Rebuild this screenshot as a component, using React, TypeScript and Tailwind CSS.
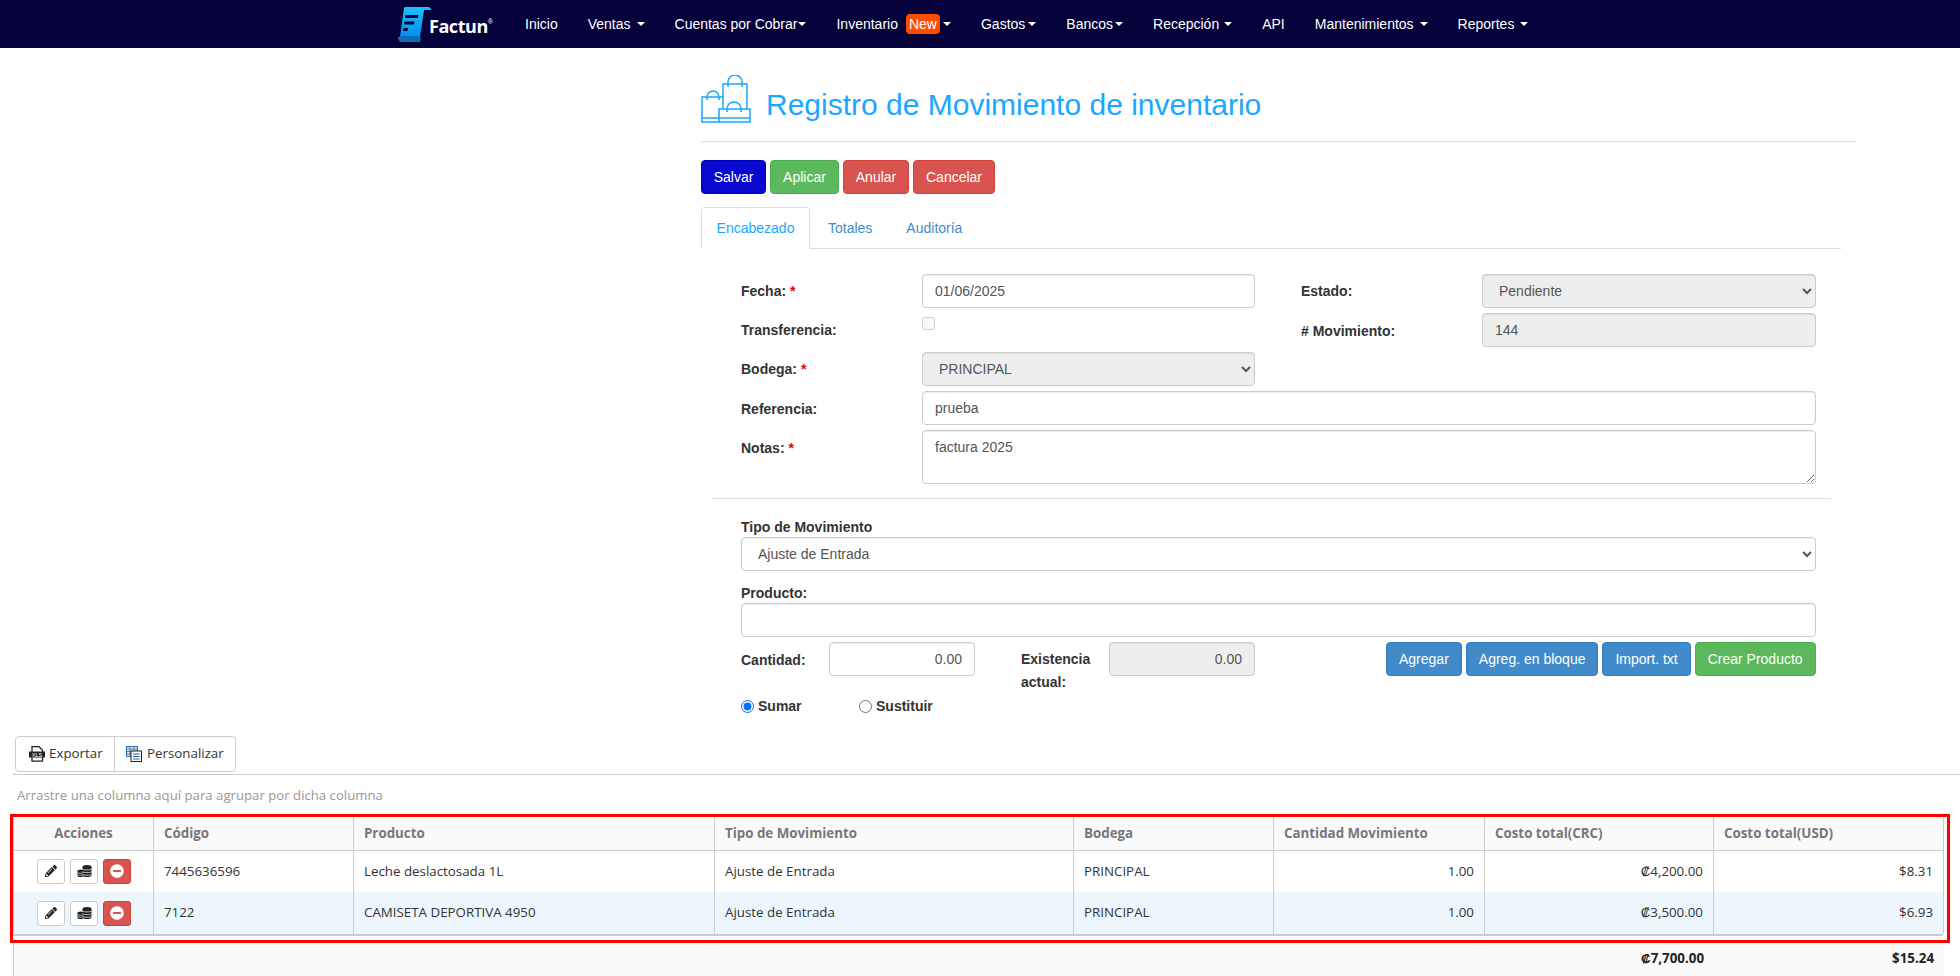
import { FaMinusCircle, FaPencilAlt } from "react-icons/fa";

const navItems = [
  { label: "Inicio" },
  { label: "Ventas", caret: "ml-[6px] flex" },
  { label: "Cuentas por Cobrar", caret: "ml-[1px] flex" },
  { label: "Inventario", caret: "ml-[3px] flex", badge: "New" },
  { label: "Gastos", caret: "ml-[3px] flex" },
  { label: "Bancos", caret: "ml-[2px] flex" },
  { label: "Recepción", caret: "ml-[5px] flex" },
  { label: "API" },
  { label: "Mantenimientos", caret: "ml-[6px] flex" },
  { label: "Reportes", caret: "ml-[6px] flex" },
];

const rows = [
  { code: "7445636596", product: "Leche deslactosada 1L", qty: "1.00", crc: "₡4,200.00", usd: "$8.31", alt: false },
  { code: "7122", product: "CAMISETA DEPORTIVA 4950", qty: "1.00", crc: "₡3,500.00", usd: "$6.93", alt: true },
];

const headers = ["Código", "Producto", "Tipo de Movimiento", "Bodega", "Cantidad Movimiento", "Costo total(CRC)", "Costo total(USD)"];

const inputClass = "h-[34px] rounded border border-[#ccc] bg-white px-3 text-sm text-[#555] shadow-[inset_0_1px_1px_rgba(0,0,0,0.075)] outline-none";
const disabledClass = "h-[34px] rounded border border-[#ccc] bg-[#eee] px-3 text-sm text-[#555] shadow-[inset_0_1px_1px_rgba(0,0,0,0.075)] outline-none";
const labelClass = "text-sm font-bold text-[#333]";

function Caret() {
  return <span className="inline-block h-0 w-0 border-x-4 border-t-4 border-x-transparent border-t-white" />;
}

function Logo() {
  return (
    <div className="flex items-center">
      <svg width="34" height="36" viewBox="0 0 34 36">
        <defs>
          <linearGradient id="logoBlue" x1="0" y1="0" x2="0" y2="1">
            <stop offset="0" stopColor="#17c4ff" />
            <stop offset="1" stopColor="#0a8df0" />
          </linearGradient>
        </defs>
        <path d="M6 2C6 1 7 1 8 1h22c2 0 3 1 3 3h-7l-4 27H2z" fill="url(#logoBlue)" />
        <path d="M0 33c0-2 1-3 3-3h18l2 3-1 3H2z" fill="#0a6fb8" />
        <path d="M7.500 9h13l-.5 3H7zM6.500 15.500h10l-.5 3H6zM5.500 22h4.500l-.5 3H5z" fill="#05013a" />
      </svg>
      <span className="ml-[-3px] mt-[4px] font-['Open_Sans',sans-serif] text-[18px] font-bold leading-none tracking-tight text-white">Factun</span>
      <span className="mb-[6px] text-[7px] leading-none text-white">®</span>
    </div>
  );
}

function BagsIcon() {
  return (
    <svg width="50" height="50" viewBox="0 0 50 50" fill="none" stroke="#1aa7ff" strokeWidth="1.5">
      <path d="M22 22V9h24v25" />
      <path d="M27 12V7a7 7 0 0 1 14 0v5" />
      <path d="M18 47H1V22h21v12" />
      <path d="M6 25v-3a6 6 0 0 1 12 0v3" />
      <path d="M18 34h31v13H18z" />
      <path d="M26 37v-3a7 7 0 0 1 14 0v3" />
      <path d="M1 43h17M18 43h31" />
    </svg>
  );
}

function XlsIcon() {
  return (
    <svg width="16" height="16" viewBox="0 0 16 16">
      <path d="M3 .700h7l3.500 3.500v11h-10.500z" fill="none" stroke="#222" strokeWidth="1.300" />
      <rect x="0" y="5.500" width="16" height="6" fill="#222" />
      <text x="8" y="10.600" textAnchor="middle" fontSize="5.500" fontFamily="Liberation Sans" fill="#fff">XLS</text>
    </svg>
  );
}

function ColumnsIcon() {
  return (
    <svg width="16" height="16" viewBox="0 0 16 16" fill="none">
      <rect x="0.5" y="0.5" width="11" height="10" fill="#dbe6f5" stroke="#3b6aa8" />
      <path d="M0.500 3h11M0.500 5.500h11M0.500 8h11M4 1v9M8 1v9" stroke="#3b6aa8" strokeWidth="0.800" />
      <rect x="5" y="5" width="10.500" height="10.500" fill="#fff" stroke="#222" />
      <path d="M7 8h6.500M7 10.500h6.500M7 13h6.500" stroke="#2a5ea8" />
    </svg>
  );
}

function CoinsIcon() {
  return (
    <svg width="15" height="12" viewBox="0 0 15 12" fill="#222">
      <ellipse cx="10" cy="2" rx="4.500" ry="2" />
      <rect x="5.500" y="2" width="9" height="8" />
      <ellipse cx="10" cy="10" rx="4.500" ry="2" />
      <ellipse cx="3.500" cy="6" rx="3" ry="1.500" />
      <rect x="0.500" y="6" width="6" height="4.500" />
      <ellipse cx="3.500" cy="10.500" rx="3" ry="1.500" />
      <path d="M5.500 4c1 1.200 8 1.200 9 0M5.500 6.700c1 1.200 8 1.200 9 0M5.500 9.400c1 1.200 8 1.200 9 0" stroke="#fff" strokeWidth="0.700" fill="none" />
      <path d="M0.500 7.500c.8 1 5.200 1 6 0M0.500 9.500c.8 1 5.200 1 6 0" stroke="#fff" strokeWidth="0.600" fill="none" />
    </svg>
  );
}

function ActionButtons() {
  return (
    <div className="flex justify-center gap-[5px] pl-[1px]">
      <button className="flex h-[25px] w-[28px] items-center justify-center rounded-[3px] border border-[#ccc] bg-white text-[12px] text-[#222]">
        <FaPencilAlt />
      </button>
      <button className="flex h-[25px] w-[28px] items-center justify-center rounded-[3px] border border-[#ccc] bg-white">
        <CoinsIcon />
      </button>
      <button className="flex h-[25px] w-[28px] items-center justify-center rounded-[3px] border border-[#d43f3a] bg-[#d9534f] text-[14px] text-white">
        <FaMinusCircle />
      </button>
    </div>
  );
}

export default function App() {
  return (
    <div className="h-[976px] overflow-hidden bg-white font-['Liberation_Sans',sans-serif] text-sm text-[#333]">
      <nav className="flex h-[48px] items-center bg-[#05013a] pl-[398px] text-white">
        <div className="w-[112px]">
          <Logo />
        </div>
        {navItems.map((item) => (
          <a key={item.label} className="flex items-center px-[15px] text-sm">
            {item.label}
            {item.badge && <span className="ml-2 rounded-[4px] bg-[#ff4d00] px-[3px] leading-[20px]">{item.badge}</span>}
            {item.caret && (
              <span className={item.caret}>
                <Caret />
              </span>
            )}
          </a>
        ))}
      </nav>

      <main className="ml-[701px] w-[1155px]">
        <div className="flex items-center gap-[15px] border-b border-[#ddd] pb-[16px] pt-[27px]">
          <BagsIcon />
          <h1 className="pt-[8px] text-[30px] font-normal leading-[33px] text-[#1aa7ff]">Registro de Movimiento de inventario</h1>
        </div>

        <div className="mt-[18px] flex gap-[4px]">
          <button className="h-[34px] w-[65px] rounded border border-[#0000b8] bg-[#0808d0] text-white">Salvar</button>
          <button className="h-[34px] w-[69px] rounded border border-[#4cae4c] bg-[#5cb85c] text-white">Aplicar</button>
          <button className="h-[34px] w-[66px] rounded border border-[#d43f3a] bg-[#d9534f] text-white">Anular</button>
          <button className="h-[34px] w-[82px] rounded border border-[#d43f3a] bg-[#d9534f] text-white">Cancelar</button>
        </div>

        <div className="mt-[13px] flex h-[42px] w-[1140px] border-b border-[#ddd]">
          <div className="h-[42px] w-[109px] rounded-t border border-b-white border-[#ddd] bg-white text-center leading-[40px] text-[#1aa7ff]">Encabezado</div>
          <div className="ml-[2px] px-[16px] leading-[42px] text-[#428bca]">Totales</div>
          <div className="ml-[2px] px-[16px] leading-[42px] text-[#428bca]">Auditoría</div>
        </div>

        <section className="w-[1115px] pl-[40px]">
          <div className="mt-[25px] flex">
            <label className={`${labelClass} w-[181px] pt-[7px]`}>Fecha: <span className="text-red-600">*</span></label>
            <input className={`${inputClass} w-[333px]`} defaultValue="01/06/2025" />
            <label className={`${labelClass} ml-[46px] w-[181px] pt-[7px]`}>Estado:</label>
            <select disabled className={`${disabledClass} w-[334px]`} defaultValue="Pendiente">
              <option>Pendiente</option>
            </select>
          </div>

          <div className="mt-[5px] flex">
            <label className={`${labelClass} w-[181px] pt-[7px]`}>Transferencia:</label>
            <div className="w-[333px] pt-[4px]">
              <input type="checkbox" disabled className="block h-[13px] w-[13px]" />
            </div>
            <label className={`${labelClass} ml-[46px] w-[181px] pt-[8px]`}># Movimiento:</label>
            <input disabled className={`${disabledClass} w-[334px]`} defaultValue="144" />
          </div>

          <div className="mt-[5px] flex">
            <label className={`${labelClass} w-[181px] pt-[7px]`}>Bodega: <span className="text-red-600">*</span></label>
            <select disabled className={`${disabledClass} w-[333px]`} defaultValue="PRINCIPAL">
              <option>PRINCIPAL</option>
            </select>
          </div>

          <div className="mt-[5px] flex">
            <label className={`${labelClass} w-[181px] pt-[8px]`}>Referencia:</label>
            <input className={`${inputClass} w-[894px]`} defaultValue="prueba" />
          </div>

          <div className="mt-[5px] flex">
            <label className={`${labelClass} w-[181px] pt-[8px]`}>Notas: <span className="text-red-600">*</span></label>
            <textarea className="h-[54px] w-[894px] rounded border border-[#ccc] bg-white px-3 py-[6px] text-sm text-[#555] shadow-[inset_0_1px_1px_rgba(0,0,0,0.075)] outline-none" defaultValue="factura 2025" />
          </div>
        </section>

        <div className="ml-[10px] mt-[14px] w-[1120px] border-t border-[#ddd]" />

        <section className="w-[1115px] pl-[40px]">
          <label className={`${labelClass} mt-[18px] block leading-[20px]`}>Tipo de Movimiento</label>
          <select className={`${inputClass} block w-[1075px]`} defaultValue="Ajuste de Entrada">
            <option>Ajuste de Entrada</option>
          </select>
          <label className={`${labelClass} mt-[12px] block leading-[20px]`}>Producto:</label>
          <input className={`${inputClass} block w-[1075px]`} />

          <div className="mt-[5px] flex">
            <label className={`${labelClass} w-[88px] pt-[8px]`}>Cantidad:</label>
            <input className={`${inputClass} w-[146px] text-right`} defaultValue="0.00" />
            <label className={`${labelClass} ml-[46px] w-[88px] pt-[6px] leading-[23px]`}>Existencia actual:</label>
            <input disabled className={`${disabledClass} w-[146px] text-right`} defaultValue="0.00" />
            <div className="ml-[131px] flex gap-[4px]">
              <button className="h-[34px] rounded border border-[#357ebd] bg-[#428bca] px-3 text-white">Agregar</button>
              <button className="h-[34px] rounded border border-[#357ebd] bg-[#428bca] px-3 text-white">Agreg. en bloque</button>
              <button className="h-[34px] rounded border border-[#357ebd] bg-[#428bca] px-3 text-white">Import. txt</button>
              <button className="h-[34px] rounded border border-[#4cae4c] bg-[#5cb85c] px-3 text-white">Crear Producto</button>
            </div>
          </div>

          <div className="mt-[2px] flex items-center">
            <input type="radio" name="modo" defaultChecked className="h-[13px] w-[13px]" />
            <label className={`${labelClass} ml-[4px] w-[101px]`}>Sumar</label>
            <input type="radio" name="modo" className="h-[13px] w-[13px]" />
            <label className={`${labelClass} ml-[4px]`}>Sustituir</label>
          </div>
        </section>
      </main>

      <div className="mt-[20px] font-['Open_Sans',sans-serif] text-[13.33px]">
        <div className="ml-[13px] border-b border-[#ccc] pb-[2px]">
          <div className="ml-[2px] flex h-[36px] w-[221px] rounded border border-[#ccc] text-[#333]">
            <div className="flex w-[99px] items-center gap-[4px] border-r border-[#ccc] pl-[13px]">
              <XlsIcon />
              Exportar
            </div>
            <div className="flex items-center gap-[5px] pl-[11px]">
              <ColumnsIcon />
              Personalizar
            </div>
          </div>
        </div>
        <p className="ml-[17px] mt-[10px] text-[13.2px] leading-[20px] text-[#999]">Arrastre una columna aquí para agrupar por dicha columna</p>

        <div className="ml-[10px] mt-[9px] w-[1940px] border-[3px] border-[#f00] pb-[4px] pr-[4px]">
          <table className="w-[1930px] table-fixed border-collapse">
            <colgroup>
              <col className="w-[140px]" />
              <col className="w-[200px]" />
              <col className="w-[361px]" />
              <col className="w-[359px]" />
              <col className="w-[200px]" />
              <col className="w-[211px]" />
              <col className="w-[229px]" />
              <col className="w-[230px]" />
            </colgroup>
            <thead>
              <tr className="h-[33px] border-b border-[#ccc] bg-[#fafafa] font-bold text-[#777]">
                <th className="border-x border-[#ccc] text-center">Acciones</th>
                {headers.map((header) => (
                  <th key={header} className="border-x border-[#ccc] px-[10px] text-left">{header}</th>
                ))}
              </tr>
            </thead>
            <tbody>
              {rows.map((row) => (
                <tr key={row.code} className={`h-[42px] text-[#333] ${row.alt ? "bg-[#edf6fd]" : "bg-white"}`}>
                  <td className="border-x border-[#ccc]"><ActionButtons /></td>
                  <td className="border-x border-[#ccc] px-[10px]">{row.code}</td>
                  <td className="border-x border-[#ccc] px-[10px]">{row.product}</td>
                  <td className="border-x border-[#ccc] px-[10px]">Ajuste de Entrada</td>
                  <td className="border-x border-[#ccc] px-[10px]">PRINCIPAL</td>
                  <td className="border-x border-[#ccc] px-[10px] text-right">{row.qty}</td>
                  <td className="border-x border-[#ccc] px-[10px] text-right">{row.crc}</td>
                  <td className="border-x border-[#ccc] px-[10px] text-right">{row.usd}</td>
                </tr>
              ))}
            </tbody>
          </table>
          <div className="h-[2px] w-[1930px] bg-[#ccc]" />
        </div>

        <div className="ml-[13px] flex h-[40px] w-[1931px] items-start justify-end border-l border-[#ccc] bg-[#fafafa] pt-[6px] font-bold text-[#222]">
          <span className="w-[200px] pr-[10px] text-right">₡7,700.00</span>
          <span className="w-[230px] pr-[10px] text-right">$15.24</span>
        </div>
      </div>
    </div>
  );
}
